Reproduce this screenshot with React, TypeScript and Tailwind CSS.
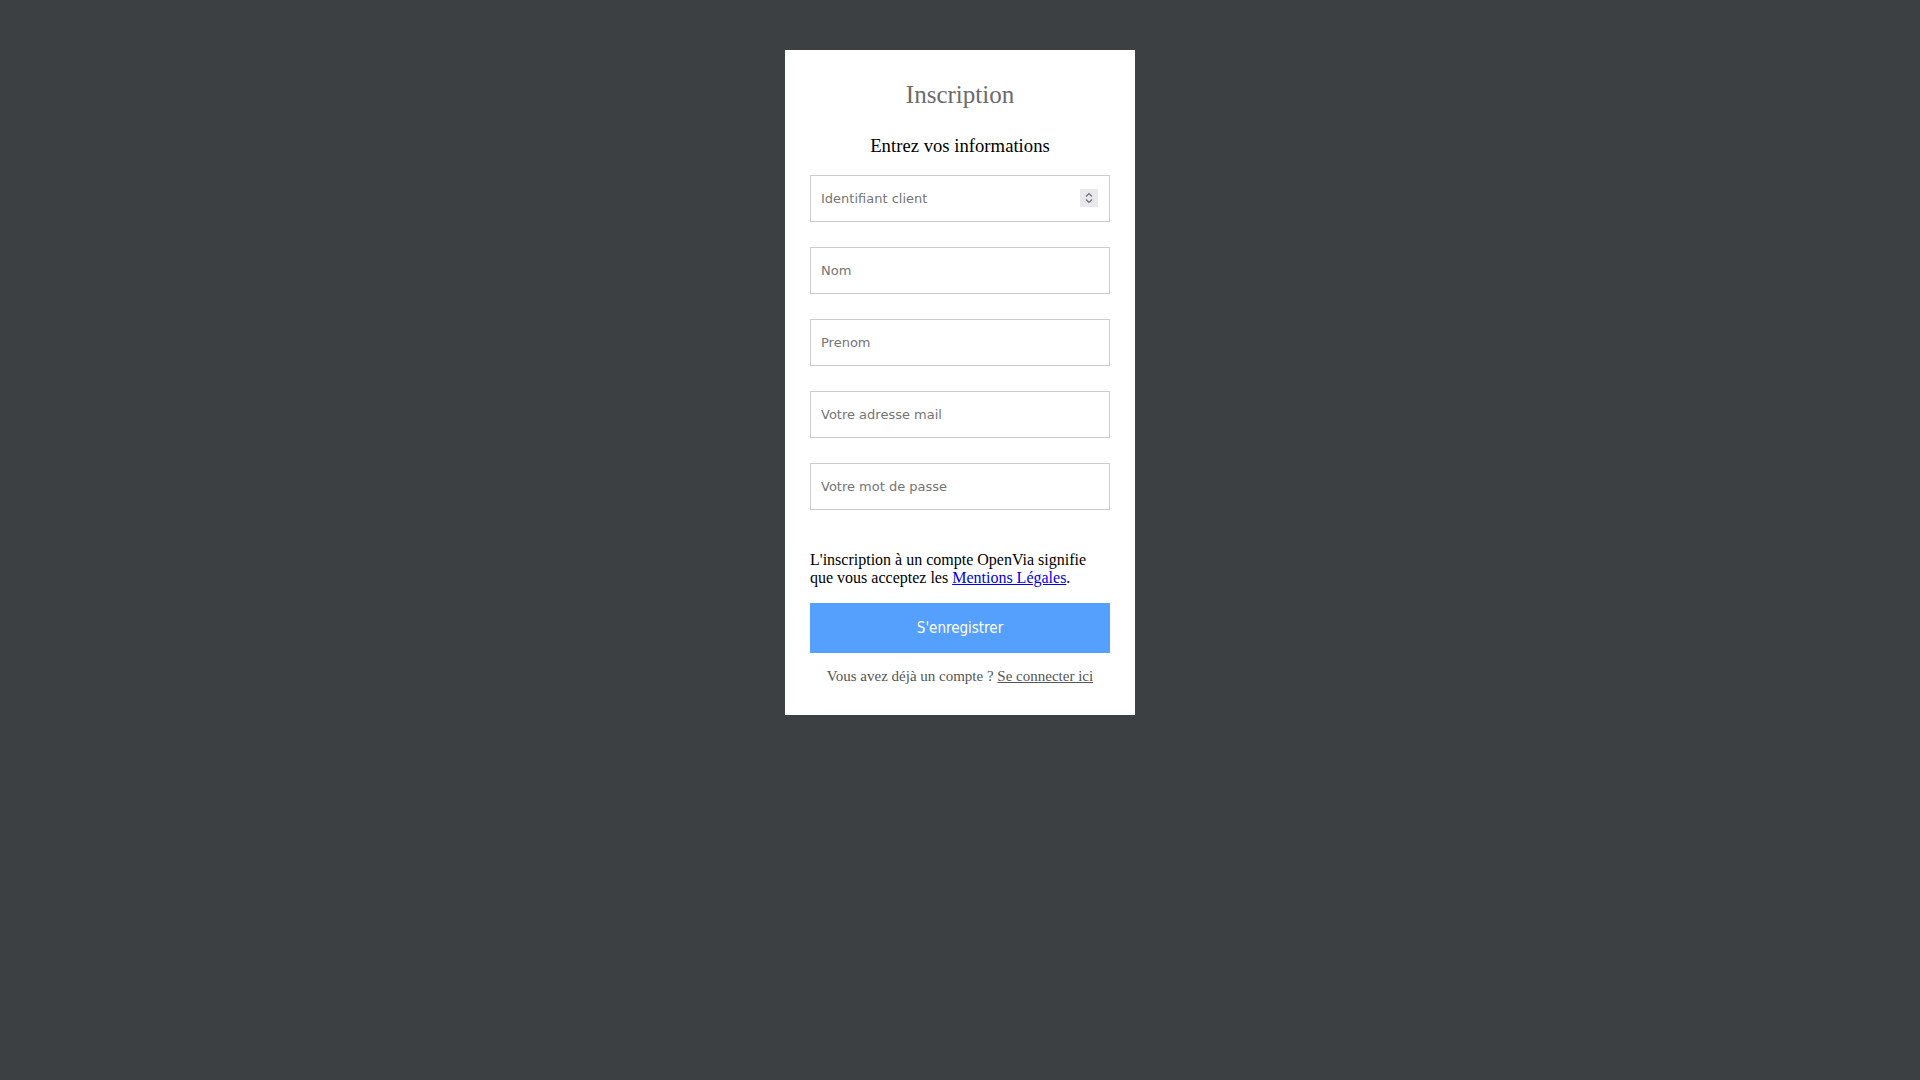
const inputFont = { fontFamily: '"DejaVu Sans", sans-serif' };
const buttonFont = { fontFamily: '"DejaVu Sans Condensed", "DejaVu Sans", sans-serif' };

function Field({ placeholder, spinner }: { placeholder: string; spinner?: boolean }) {
  return (
    <div className="relative">
      <input
        type="text"
        placeholder={placeholder}
        style={inputFont}
        className="block h-[47px] w-full border border-[#cccccc] bg-white px-[10px] text-[13px] text-[#333] outline-none placeholder:text-[#757575]"
      />
      {spinner && (
        <div className="absolute right-[12px] top-[14px] flex h-[18px] w-[18px] flex-col items-center justify-center gap-[2px] bg-[#e9e9ed]">
          <svg width="8" height="5" viewBox="0 0 8 5" fill="none">
            <path d="M1 4.5 L4 1.5 L7 4.5" stroke="#6b6b70" strokeWidth="1.1" />
          </svg>
          <svg width="8" height="5" viewBox="0 0 8 5" fill="none">
            <path d="M1 0.5 L4 3.5 L7 0.5" stroke="#6b6b70" strokeWidth="1.1" />
          </svg>
        </div>
      )}
    </div>
  );
}

export default function App() {
  return (
    <div className="flex min-h-screen justify-center bg-[#3c4043] pt-[50px]" style={{ fontFamily: '"Liberation Serif", serif' }}>
      <div className="h-fit w-[350px] bg-white px-[25px] pb-[30px] pt-[30px]">
        <h1 className="text-center text-[25px] leading-[30px] text-[#6b6b6b]">Inscription</h1>
        <h2 className="mt-[25px] text-center text-[18.7px] leading-[22px] text-black">Entrez vos informations</h2>

        <div className="mt-[18px] flex flex-col gap-[25px]">
          <Field placeholder="Identifiant client" spinner />
          <Field placeholder="Nom" />
          <Field placeholder="Prenom" />
          <Field placeholder="Votre adresse mail" />
          <Field placeholder="Votre mot de passe" />
        </div>

        <p className="mt-[41px] text-[16px] leading-[18px] text-black">
          L'inscription à un compte OpenVia signifie que vous acceptez les{" "}
          <a href="#" className="text-[#0000ee] underline">
            Mentions Légales
          </a>
          .
        </p>

        <button
          type="button"
          style={buttonFont}
          className="mt-[16px] block h-[50px] w-full bg-[#56a0fd] text-[15px] text-white"
        >
          S'enregistrer
        </button>

        <p className="mt-[15px] text-center text-[15px] leading-[17px] text-[#555555]">
          Vous avez déjà un compte ?{" "}
          <a href="#" className="text-[#555555] underline">
            Se connecter ici
          </a>
        </p>
      </div>
    </div>
  );
}
